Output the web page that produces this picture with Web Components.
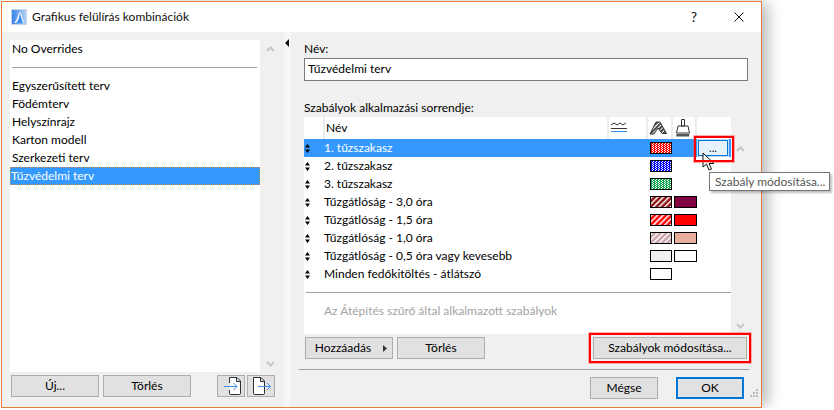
<!DOCTYPE html>
<html lang="hu">
<head>
<meta charset="utf-8">
<title>Grafikus felülírás kombinációk</title>
<style>
html,body{margin:0;padding:0;background:#fff;overflow:hidden}
body{font:12px/16px Lato,"Open Sans",sans-serif;color:#000}
</style>
</head>
<body>
<x-dialog>
  <x-titlebar slot="title">Grafikus felülírás kombinációk</x-titlebar>
  <x-sets slot="left"></x-sets>
  <x-rules slot="right"></x-rules>
</x-dialog>
<script>
function def(name, css, html, init){
  customElements.define(name, class extends HTMLElement{
    constructor(){
      super();
      const r=this.attachShadow({mode:'open'});
      r.innerHTML='<style>'+css+'</style>'+html;
    }
    connectedCallback(){ if(init && !this._i){this._i=1;init.call(this,this.shadowRoot);} }
  });
}
const chevUp='<svg width="9" height="6" viewBox="0 0 9 6"><path d="M1 5 4.500 1.500 8 5" fill="none" stroke="#c6c6c6" stroke-width="2"/></svg>';
const chevDn='<svg width="9" height="6" viewBox="0 0 9 6"><path d="M1 1 4.500 4.500 8 1" fill="none" stroke="#c6c6c6" stroke-width="2"/></svg>';

def('x-dialog',`
:host{display:block;box-sizing:border-box;position:relative;margin:1px 0 0 1px;width:761px;height:407px;border:1px solid #e87b3c;background:#f0f0f0;box-shadow:8px 0 14px -2px rgba(0,0,0,.28)}
.body{display:grid;grid-template-columns:282px 7px 1fr;height:375px}
.split{background:#f6f6f6;position:relative}
.split svg{position:absolute;left:1px;top:7px}
`,`<slot name="title"></slot>
<div class="body"><div><slot name="left"></slot></div>
<div class="split"><svg width="5" height="8" viewBox="0 0 5 8"><path d="M4 0V8L0 4Z" fill="#111"/></svg></div>
<div><slot name="right"></slot></div></div>`);

def('x-titlebar',`
:host{display:flex;align-items:center;height:30px;background:#fff;padding-left:9px;font-size:12px;color:#111}
svg.logo{margin-right:5px;flex:none}
.t{flex:1}
.q{width:14px;font-size:14px;font-weight:400;margin-right:33px;text-align:center;color:#111}
.x{margin-right:17px}
`,`<svg class="logo" width="16" height="16" viewBox="0 0 16 16"><defs><linearGradient id="lg" x1="0" y1="0" x2="1" y2="0"><stop offset="0" stop-color="#2f7fe6"/><stop offset="1" stop-color="#bcd6f6"/></linearGradient></defs><rect width="16" height="16" fill="url(#lg)"/><rect x=".5" y=".5" width="15" height="15" fill="none" stroke="#c5d4e8"/><path d="M3 14C6 12 7 4 9 3c2 1 3 9 4 11h-2C10 11 9.500 8 9 6 8 9 7 12 5 14Z" fill="#fff" opacity=".9"/><path d="M6 14C8 11 8.500 7 9 4c1 3 2 8 3 10Z" fill="#3f8cee"/></svg>
<span class="t"><slot></slot></span><span class="q">?</span>
<svg class="x" width="10" height="10" viewBox="0 0 10 10"><path d="M.5.5 9.500 9.500M9.500.5.5 9.500" stroke="#111" stroke-width="1"/></svg>`);

def('x-btn',`
:host{display:flex;align-items:center;justify-content:center;box-sizing:border-box;height:22px;width:var(--w,88px);background:#e1e1e1;border:1px solid #adadad;color:#000;font-size:12px;flex:none}
:host([default]){border:2px solid #0078d7}
`,`<slot></slot>`);

def('x-sets',`
:host{display:block;padding:8px 0 0 8px}
.top{display:flex;height:332px}
.list{width:250px;background:#fff;font-size:12px;box-sizing:border-box}
.it{height:18px;line-height:17px;padding-left:2px;box-sizing:border-box}
.it.sel{background:#3399ff;color:#fff;outline:1px dotted #c98a5a;outline-offset:-1px;padding-left:1px}
hr{border:0;border-top:1px solid #a0a0a0;margin:9px 3px 9px 2px;height:0;width:245px}
.sb{display:flex;flex-direction:column;align-items:center;justify-content:space-between;padding:6px 0 5px 3px;box-sizing:border-box;width:18px}
.btns{display:flex;margin:3px 0 0 1px;gap:4px}
.sp{width:18px}
.btns x-btn.i{--w:28px}
.pair{display:flex;gap:2px}
`,`<div class="top"><div class="list">
<div class="it">No Overrides</div><hr>
<div class="it">Egyszerűsített terv</div><div class="it">Födémterv</div><div class="it">Helyszínrajz</div><div class="it">Karton modell</div><div class="it">Szerkezeti terv</div><div class="it sel">Tűzvédelmi terv</div>
</div><div class="sb">${chevUp}${chevDn}</div></div>
<div class="btns"><x-btn>Új...</x-btn><x-btn>Törlés</x-btn><span class="sp"></span>
<div class="pair"><x-btn class="i"><svg width="22" height="20" viewBox="0 0 22 20"><path d="M9.500 1.500H17L20.500 5V17.500Q20.500 18.500 19.500 18.500H10.500Q9.500 18.500 9.500 17.500V14M9.500 7V1.500M16.500 1.500V5.500H20.500" fill="#fff" stroke="#2b2f36"/><path d="M4 10.500H17M13.500 7 17 10.500 13.500 14" fill="none" stroke="#3f8fee" stroke-width="1"/></svg></x-btn>
<x-btn class="i"><svg width="22" height="20" viewBox="0 0 22 20"><path d="M3.500 1.500H11L14.500 5V17.500Q14.500 18.500 13.500 18.500H4.500Q3.500 18.500 3.500 17.500ZM10.500 1.500V5.500H14.500" fill="#fff" stroke="#2b2f36"/><path d="M8 10.500H20.500M17 7 20.500 10.500 17 14" fill="none" stroke="#3f8fee" stroke-width="1"/></svg></x-btn></div></div>`);

def('x-swatch',`
:host{display:block;box-sizing:border-box;height:12px;border:1px solid #000;background:var(--bg,#fff)}
svg{display:block;width:100%;height:100%}
`,``,function(r){
  const k=this.getAttribute('kind'), c=this.getAttribute('c')||'#000', b=this.getAttribute('b')||'#fff';
  const id='p'+Math.random().toString(36).slice(2);
  if(k==='dots'){
    r.innerHTML+=`<svg><defs><pattern id="${id}" width="3" height="2" patternUnits="userSpaceOnUse"><rect width="3" height="2" fill="#fff"/><rect x="0" y="0" width="2" height="1" fill="${c}"/><rect x="2" y="1" width="1" height="1" fill="${c}"/><rect x="0" y="1" width="1" height="1" fill="${c}"/></pattern></defs><rect width="100%" height="100%" fill="url(#${id})"/></svg>`;
  } else if(k==='hatch'){
    r.innerHTML+=`<svg><defs><pattern id="${id}" width="4" height="4" patternUnits="userSpaceOnUse" patternTransform="rotate(45)"><rect width="4" height="4" fill="${b}"/><rect width="1.500" height="4" fill="#fff"/></pattern></defs><rect width="100%" height="100%" fill="url(#${id})"/></svg>`;
  } else {
    this.style.setProperty('--bg',c);
  }
});

def('x-rule',`
:host{display:grid;grid-template-columns:20px 326px 24px 1fr;height:18px;align-items:center;font-size:12px}
:host([selected]){background:#3399ff;color:#fff}
.mv{display:flex;justify-content:flex-start;padding-left:1px}
.a{grid-column:3;padding:0 1px 0 0;width:22px}
.b{grid-column:4}
.b div{width:23px}
`,`<div class="mv"><svg width="5" height="9" viewBox="0 0 5 9"><path d="M2.500 0 5 3.500H0ZM2.500 9 0 5.500H5Z" fill="#000"/></svg></div><div><slot></slot></div><div class="a"><slot name="a"></slot></div><div class="b"><div><slot name="b"></slot></div></div>`);

def('x-rules',`
:host{display:block;padding:9px 0 0 13px;position:relative;height:366px;box-sizing:border-box}
label{display:block;font-size:12px;line-height:16px}
.inp{box-sizing:border-box;width:444px;height:23px;border:1px solid #7a7a7a;background:#fff;font-size:12px;line-height:20px;padding-left:3px;margin-top:1px}
.l2{margin-top:18px;height:18px;line-height:17px}
.tb{display:flex;width:445px;height:217px}
.white{width:427px;background:#fff}
.sb{width:18px;display:flex;flex-direction:column;align-items:center;justify-content:space-between;padding:29px 0 5px 0;box-sizing:border-box}
.hd{display:grid;grid-template-columns:21px 284px 39px 25px 24px 34px;height:22px;font-size:12px}
.hd div{border-right:2px solid #ececec;box-sizing:border-box;padding-left:1px;display:flex;align-items:center}
.hd div:last-child{border:0}
.hd svg{display:block}
.note{border-top:1px solid #a0a0a0;margin:9px 0 0 2px;padding:9px 0 0 18px;color:#a3a3a3;font-size:12px;line-height:17px}
.btns{display:flex;margin:3px 0 0 1px;gap:4px;width:442px}
.grow{flex:1}
.arrow{display:flex;gap:12px;align-items:center;padding-left:4px}
.sep{border-top:1px solid #a0a0a0;margin:10px 12px 0 -5px;height:0}
.foot{display:flex;justify-content:flex-end;gap:18px;margin:7px 17px 0 0}
.foot x-btn{--w:68px}
.red{position:absolute;border:2px solid #f00;box-shadow:0 0 0 1px rgba(255,80,80,.45);box-sizing:border-box;pointer-events:none}
.ell{position:absolute;left:407px;top:108px;width:30px;height:16px;box-sizing:border-box;border:1px solid #0078d7;background:#e5f1fb;outline:1px solid #bcdcf7;font-size:11px;line-height:14px;text-align:center;color:#111}
.cur{position:absolute;left:411px;top:120px}
.tip{position:absolute;left:418px;top:140px;box-sizing:border-box;height:19px;width:fit-content;background:#fff;border:1px solid #767676;color:#555;font-size:12px;line-height:17px;padding:0 4px 0 5px;white-space:nowrap;box-shadow:2px 2px 2px rgba(0,0,0,.25)}
.grip{position:absolute;right:2px;bottom:0}
`,`<label>Név:</label><div class="inp">Tűzvédelmi terv</div>
<label class="l2">Szabályok alkalmazási sorrendje:</label>
<div class="tb"><div class="white">
<div class="hd"><div></div><div>Név</div>
<div><svg width="18" height="12" viewBox="0 0 18 12"><path d="M1 3 4 1 7 3 10 1 13 3 16 1" fill="none" stroke="#333"/><path d="M1 6.500H17" stroke="#333"/><path d="M1 9.500H17" stroke="#3f8fee"/></svg></div>
<div><svg width="19" height="14" viewBox="0 0 19 14"><defs><pattern id="hh" width="3" height="3" patternUnits="userSpaceOnUse" patternTransform="rotate(-45)"><rect width="3" height="1.800" fill="#333"/></pattern></defs><path d="M1 13 7 1H11L17.500 12.500H13L9 7 5 13Z" fill="url(#hh)" stroke="#333"/></svg></div>
<div><svg width="18" height="18" viewBox="0 0 18 18"><path d="M7.500.5H10.500V7H7.500ZM4 7H14L15.500 14H2.500Z" fill="#fff" stroke="#333"/><path d="M2.500 15H15.500L15 17.500H2Z" fill="#555"/></svg></div><div></div></div>
<x-rule selected>1. tűzszakasz<x-swatch slot="a" kind="dots" c="#f00"></x-swatch></x-rule>
<x-rule>2. tűzszakasz<x-swatch slot="a" kind="dots" c="#00f"></x-swatch></x-rule>
<x-rule>3. tűzszakasz<x-swatch slot="a" kind="dots" c="#10a850"></x-swatch></x-rule>
<x-rule>Tűzgátlóság - 3,0 óra<x-swatch slot="a" kind="hatch" b="#8b0f10"></x-swatch><x-swatch slot="b" c="#800040"></x-swatch></x-rule>
<x-rule>Tűzgátlóság - 1,5 óra<x-swatch slot="a" kind="hatch" b="#f00"></x-swatch><x-swatch slot="b" c="#f00"></x-swatch></x-rule>
<x-rule>Tűzgátlóság - 1,0 óra<x-swatch slot="a" kind="hatch" b="#c9a0a8"></x-swatch><x-swatch slot="b" c="#e8ae9c"></x-swatch></x-rule>
<x-rule>Tűzgátlóság - 0,5 óra vagy kevesebb<x-swatch slot="a" c="#f0f0f0"></x-swatch><x-swatch slot="b" c="#fff"></x-swatch></x-rule>
<x-rule>Minden fedőkitöltés - átlátszó<x-swatch slot="a" c="#fff"></x-swatch></x-rule>
<div class="note">Az Átépítés szűrő által alkalmazott szabályok</div>
</div><div class="sb">${chevUp}${chevDn}</div></div>
<div class="btns"><x-btn><span class="arrow">Hozzáadás<svg width="4" height="7" viewBox="0 0 4 7"><path d="M0 0 4 3.500 0 7Z" fill="#333"/></svg></span></x-btn><x-btn>Törlés</x-btn><span class="grow"></span><x-btn style="--w:154px">Szabályok módosítása...</x-btn></div>
<div class="sep"></div>
<div class="foot"><x-btn>Mégse</x-btn><x-btn default>OK</x-btn></div>
<div class="ell">...</div>
<svg class="cur" width="14" height="20" viewBox="0 0 14 20"><path d="M1 1V15L4.500 12 7 18 9.500 17 7 11.500H12Z" fill="#fff" stroke="#111"/></svg>
<div class="tip">Szabály módosítása...</div>
<div class="red" style="left:403px;top:104px;width:40px;height:26px"></div>
<div class="red" style="left:298px;top:301px;width:162px;height:30px"></div>
<svg class="grip" width="10" height="10" viewBox="0 0 10 10"><g fill="#bbb"><rect x="7" y="1" width="2" height="2"/><rect x="4" y="4" width="2" height="2"/><rect x="7" y="4" width="2" height="2"/><rect x="1" y="7" width="2" height="2"/><rect x="4" y="7" width="2" height="2"/><rect x="7" y="7" width="2" height="2"/></g></svg>`);
</script>
</body>
</html>
